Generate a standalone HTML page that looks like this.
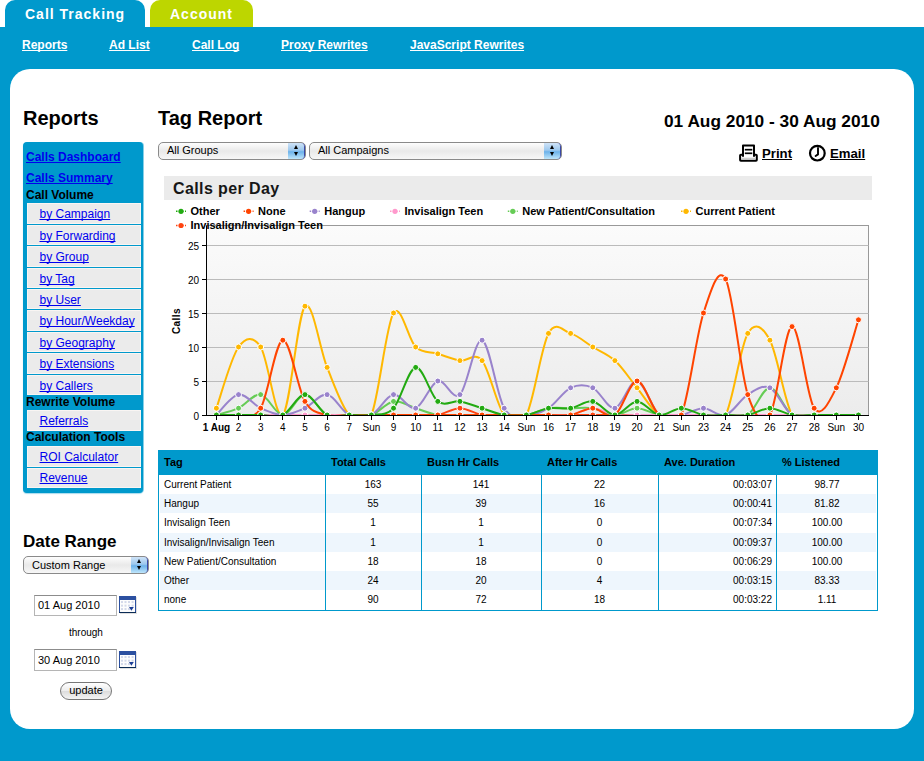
<!DOCTYPE html>
<html><head><meta charset="utf-8">
<style>
*{margin:0;padding:0;box-sizing:border-box;text-decoration-skip-ink:none}
html,body{width:924px;height:761px;overflow:hidden;background:#fff;font-family:"Liberation Sans",sans-serif;color:#000}
.abs{position:absolute}
#band{position:absolute;left:0;top:27px;width:924px;height:734px;background:#0099cc}
.tab{position:absolute;top:0;height:27px;border-radius:10px 10px 0 0;color:#fff;font-weight:bold;font-size:14px;letter-spacing:1px;line-height:29px;padding-left:20px}
#t1{left:5px;width:140px;background:#0099cc}
#t2{left:150px;width:103px;background:#bdd600}
.nav{position:absolute;top:38px;font-size:12px;font-weight:bold;color:#fff;text-decoration:underline;line-height:14px}
#panel{position:absolute;left:10px;top:69px;width:904px;height:660px;background:#fff;border-radius:20px}
h1{position:absolute;font-size:20px;font-weight:bold;line-height:22px}
#side{position:absolute;left:23px;top:142px;width:120px;height:351px;background:#0099cc;border-radius:4px;box-shadow:1px 0 0 rgba(0,153,204,0.45),0 1px 1px rgba(0,153,204,0.35)}
.sl{position:absolute;left:3px;font-size:12px;font-weight:bold;color:#0000ee;text-decoration:underline;line-height:14px}
.sh{position:absolute;left:3px;font-size:12px;font-weight:bold;color:#000;line-height:14px}
.it{position:absolute;left:4px;width:114px;background:#ebebeb;border:1px solid #f9f5f3;font-size:12px;line-height:14px;padding-left:11.5px}
.it span{color:#0000ee;text-decoration:underline;text-decoration-skip-ink:none;position:relative}
.sel{position:absolute;height:18px;border:1px solid #8a8a8a;border-radius:4px;background:linear-gradient(#fdfdfd,#e9e9e9 50%,#f7f7f7);font-size:11px;line-height:14px;padding-left:8px;overflow:hidden;border-radius:5px}
.sel .btn{position:absolute;right:0;top:-1px;width:17px;height:18px;border-radius:0 4px 4px 0;border:1px solid #3a48a8;border-left:none;background:linear-gradient(#cfe3f7,#9cc8ee 45%,#6cb2ea 55%,#bfe6fb)}
.sel .btn:before{content:"";position:absolute;left:6px;top:2px;border-left:2.5px solid transparent;border-right:2.5px solid transparent;border-bottom:4px solid #000}
.sel .btn:after{content:"";position:absolute;left:6px;top:9px;border-left:2.5px solid transparent;border-right:2.5px solid transparent;border-top:4px solid #000}
.ax{font-family:"Liberation Sans",sans-serif;font-size:10px;fill:#000}
.lg{font-family:"Liberation Sans",sans-serif;font-size:11px;font-weight:bold;fill:#000}
#ctitle{position:absolute;left:164px;top:176px;width:708px;height:24px;background:#ebebeb;font-size:16px;font-weight:bold;letter-spacing:0.4px;line-height:25px;padding-left:9px;color:#161616}
table{position:absolute;left:158px;top:450px;width:720px;border-collapse:collapse;font-size:11px}
th{background:#0099cc;height:25px;text-align:left;padding-left:6px;font-weight:bold;font-size:11px}
td{height:19.3px;padding:0 6px;border-left:1px solid #0099cc}
.th{font-size:11px;font-weight:bold;line-height:25px}
.td{font-size:10px;line-height:19.3px}
.inp{position:absolute;left:34px;width:83px;height:21px;border:1px solid #b5b5b5;border-top-color:#8c8c8c;font-size:11px;line-height:19px;padding-left:3px;background:#fff}
.cal{position:absolute;left:119px;width:17px;height:17px}
</style></head><body>
<div class="tab" id="t1">Call Tracking</div>
<div class="tab" id="t2">Account</div>
<div id="band"></div>
<div class="nav" style="left:22px">Reports</div>
<div class="nav" style="left:109px">Ad List</div>
<div class="nav" style="left:192px">Call Log</div>
<div class="nav" style="left:281px">Proxy Rewrites</div>
<div class="nav" style="left:410px">JavaScript Rewrites</div>
<div id="panel"></div>

<h1 style="left:23px;top:107px">Reports</h1>
<h1 style="left:158px;top:107px">Tag Report</h1>
<div class="abs" style="left:664px;top:112px;font-size:17.3px;font-weight:bold;line-height:18px">01 Aug 2010 - 30 Aug 2010</div>

<div id="side">
 <div class="sl" style="top:8px">Calls Dashboard</div>
 <div class="sl" style="top:29px">Calls Summary</div>
 <div class="sh" style="top:46px">Call Volume</div>
 <div class="it" style="top:61px;height:21px"><span style="top:3px">by Campaign</span></div>
 <div class="it" style="top:83px;height:20px"><span style="top:3px">by Forwarding</span></div>
 <div class="it" style="top:104px;height:21px"><span style="top:3px">by Group</span></div>
 <div class="it" style="top:126px;height:20px"><span style="top:3px">by Tag</span></div>
 <div class="it" style="top:147px;height:20px"><span style="top:3px">by User</span></div>
 <div class="it" style="top:168px;height:21px"><span style="top:3px">by Hour/Weekday</span></div>
 <div class="it" style="top:190px;height:20px"><span style="top:3px">by Geography</span></div>
 <div class="it" style="top:211px;height:21px"><span style="top:3px">by Extensions</span></div>
 <div class="it" style="top:233px;height:20px"><span style="top:3px">by Callers</span></div>
 <div class="sh" style="top:253px">Rewrite Volume</div>
 <div class="it" style="top:268px;height:21px"><span style="top:3px">Referrals</span></div>
 <div class="sh" style="top:288px">Calculation Tools</div>
 <div class="it" style="top:304px;height:21px"><span style="top:3px">ROI Calculator</span></div>
 <div class="it" style="top:326px;height:20px"><span style="top:2px">Revenue</span></div>
</div>

<div class="sel" style="left:158px;top:142px;width:148px">All Groups<div class="btn"></div></div>
<div class="sel" style="left:309px;top:142px;width:253px">All Campaigns<div class="btn"></div></div>

<svg class="abs" style="left:735px;top:138px" width="30" height="30" viewBox="0 0 30 30">
 <rect x="5.1" y="16.8" width="16.7" height="6" fill="#fff" stroke="#000" stroke-width="2" rx="0.8"/>
 <line x1="6.5" y1="20.3" x2="20.5" y2="20.3" stroke="#c8c8c8" stroke-width="1.2"/>
 <path d="M8,18.8 V7.4 H19 V18.8" fill="#fff" stroke="#000" stroke-width="2" stroke-linejoin="round"/>
 <line x1="9.8" y1="11.7" x2="17.3" y2="11.7" stroke="#000" stroke-width="1.7"/>
 <line x1="9.8" y1="15.3" x2="17.3" y2="15.3" stroke="#000" stroke-width="1.7"/>
</svg>
<div class="abs" style="left:762px;top:146px;font-size:13.2px;font-weight:bold;text-decoration:underline;line-height:16px">Print</div>
<svg class="abs" style="left:805px;top:138px" width="30" height="30" viewBox="0 0 30 30">
 <circle cx="12.35" cy="15.15" r="7.35" fill="none" stroke="#000" stroke-width="2.2"/>
 <path d="M13,9.9 V16.4 L10.6,18" fill="none" stroke="#000" stroke-width="1.9" stroke-linecap="round" stroke-linejoin="round"/>
</svg>
<div class="abs" style="left:830px;top:146px;font-size:13.2px;font-weight:bold;text-decoration:underline;line-height:16px">Email</div>

<div id="ctitle">Calls per Day</div>

<svg width="924" height="761" style="position:absolute;left:0;top:0">
<defs><linearGradient id="pg" x1="0" y1="0" x2="0" y2="1"><stop offset="0" stop-color="#fbfbfb"/><stop offset="1" stop-color="#ececec"/></linearGradient><clipPath id="pc"><rect x="206.5" y="220.5" width="662.0" height="194.5"/></clipPath></defs>
<rect x="206.5" y="225.5" width="662.0" height="190.0" fill="url(#pg)" stroke="#999" stroke-width="1"/>
<line x1="206.5" y1="381.5" x2="868.5" y2="381.5" stroke="#bbb" stroke-width="1"/>
<line x1="202" y1="381.5" x2="206.5" y2="381.5" stroke="#000" stroke-width="1"/>
<line x1="206.5" y1="347.5" x2="868.5" y2="347.5" stroke="#bbb" stroke-width="1"/>
<line x1="202" y1="347.5" x2="206.5" y2="347.5" stroke="#000" stroke-width="1"/>
<line x1="206.5" y1="313.5" x2="868.5" y2="313.5" stroke="#bbb" stroke-width="1"/>
<line x1="202" y1="313.5" x2="206.5" y2="313.5" stroke="#000" stroke-width="1"/>
<line x1="206.5" y1="279.5" x2="868.5" y2="279.5" stroke="#bbb" stroke-width="1"/>
<line x1="202" y1="279.5" x2="206.5" y2="279.5" stroke="#000" stroke-width="1"/>
<line x1="206.5" y1="245.5" x2="868.5" y2="245.5" stroke="#bbb" stroke-width="1"/>
<line x1="202" y1="245.5" x2="206.5" y2="245.5" stroke="#000" stroke-width="1"/>
<g clip-path="url(#pc)"><path d="M216.40,415.00 C220.09,415.00 231.16,415.00 238.54,415.00 C245.92,415.00 253.30,415.00 260.68,415.00 C268.06,415.00 275.44,415.00 282.82,415.00 C290.20,415.00 297.58,415.00 304.96,415.00 C312.34,415.00 319.72,415.00 327.10,415.00 C334.48,415.00 341.86,415.00 349.24,415.00 C356.62,415.00 364.00,415.00 371.38,415.00 C378.76,415.00 386.14,415.00 393.52,415.00 C400.90,415.00 408.28,415.00 415.66,415.00 C423.04,415.00 430.42,416.13 437.80,415.00 C445.18,413.87 452.56,408.20 459.94,408.20 C467.32,408.20 474.70,413.87 482.08,415.00 C489.46,416.13 496.84,415.00 504.22,415.00 C511.60,415.00 518.98,415.00 526.36,415.00 C533.74,415.00 541.12,415.00 548.50,415.00 C555.88,415.00 563.26,415.00 570.64,415.00 C578.02,415.00 585.40,415.00 592.78,415.00 C600.16,415.00 607.54,415.00 614.92,415.00 C622.30,415.00 629.68,415.00 637.06,415.00 C644.44,415.00 651.82,415.00 659.20,415.00 C666.58,415.00 673.96,415.00 681.34,415.00 C688.72,415.00 696.10,415.00 703.48,415.00 C710.86,415.00 718.24,415.00 725.62,415.00 C733.00,415.00 740.38,415.00 747.76,415.00 C755.14,415.00 762.52,415.00 769.90,415.00 C777.28,415.00 784.66,415.00 792.04,415.00 C799.42,415.00 806.80,415.00 814.18,415.00 C821.56,415.00 828.94,415.00 836.32,415.00 C843.70,415.00 854.77,415.00 858.46,415.00" fill="none" stroke="#ff4411" stroke-width="2"/><circle cx="216.40" cy="415.00" r="3" fill="#ff4411" stroke="#fff" stroke-width="1"/><circle cx="238.54" cy="415.00" r="3" fill="#ff4411" stroke="#fff" stroke-width="1"/><circle cx="260.68" cy="415.00" r="3" fill="#ff4411" stroke="#fff" stroke-width="1"/><circle cx="282.82" cy="415.00" r="3" fill="#ff4411" stroke="#fff" stroke-width="1"/><circle cx="304.96" cy="415.00" r="3" fill="#ff4411" stroke="#fff" stroke-width="1"/><circle cx="327.10" cy="415.00" r="3" fill="#ff4411" stroke="#fff" stroke-width="1"/><circle cx="349.24" cy="415.00" r="3" fill="#ff4411" stroke="#fff" stroke-width="1"/><circle cx="371.38" cy="415.00" r="3" fill="#ff4411" stroke="#fff" stroke-width="1"/><circle cx="393.52" cy="415.00" r="3" fill="#ff4411" stroke="#fff" stroke-width="1"/><circle cx="415.66" cy="415.00" r="3" fill="#ff4411" stroke="#fff" stroke-width="1"/><circle cx="437.80" cy="415.00" r="3" fill="#ff4411" stroke="#fff" stroke-width="1"/><circle cx="459.94" cy="408.20" r="3" fill="#ff4411" stroke="#fff" stroke-width="1"/><circle cx="482.08" cy="415.00" r="3" fill="#ff4411" stroke="#fff" stroke-width="1"/><circle cx="504.22" cy="415.00" r="3" fill="#ff4411" stroke="#fff" stroke-width="1"/><circle cx="526.36" cy="415.00" r="3" fill="#ff4411" stroke="#fff" stroke-width="1"/><circle cx="548.50" cy="415.00" r="3" fill="#ff4411" stroke="#fff" stroke-width="1"/><circle cx="570.64" cy="415.00" r="3" fill="#ff4411" stroke="#fff" stroke-width="1"/><circle cx="592.78" cy="415.00" r="3" fill="#ff4411" stroke="#fff" stroke-width="1"/><circle cx="614.92" cy="415.00" r="3" fill="#ff4411" stroke="#fff" stroke-width="1"/><circle cx="637.06" cy="415.00" r="3" fill="#ff4411" stroke="#fff" stroke-width="1"/><circle cx="659.20" cy="415.00" r="3" fill="#ff4411" stroke="#fff" stroke-width="1"/><circle cx="681.34" cy="415.00" r="3" fill="#ff4411" stroke="#fff" stroke-width="1"/><circle cx="703.48" cy="415.00" r="3" fill="#ff4411" stroke="#fff" stroke-width="1"/><circle cx="725.62" cy="415.00" r="3" fill="#ff4411" stroke="#fff" stroke-width="1"/><circle cx="747.76" cy="415.00" r="3" fill="#ff4411" stroke="#fff" stroke-width="1"/><circle cx="769.90" cy="415.00" r="3" fill="#ff4411" stroke="#fff" stroke-width="1"/><circle cx="792.04" cy="415.00" r="3" fill="#ff4411" stroke="#fff" stroke-width="1"/><circle cx="814.18" cy="415.00" r="3" fill="#ff4411" stroke="#fff" stroke-width="1"/><circle cx="836.32" cy="415.00" r="3" fill="#ff4411" stroke="#fff" stroke-width="1"/><circle cx="858.46" cy="415.00" r="3" fill="#ff4411" stroke="#fff" stroke-width="1"/></g>
<g clip-path="url(#pc)"><path d="M216.40,408.20 C220.09,398.00 231.16,357.20 238.54,347.00 C245.92,336.80 253.30,335.67 260.68,347.00 C268.06,358.33 275.44,421.80 282.82,415.00 C290.20,408.20 297.58,314.13 304.96,306.20 C312.34,298.27 319.72,349.27 327.10,367.40 C334.48,385.53 341.86,407.07 349.24,415.00 C356.62,422.93 364.00,432.00 371.38,415.00 C378.76,398.00 386.14,324.33 393.52,313.00 C400.90,301.67 408.28,340.20 415.66,347.00 C423.04,353.80 430.42,351.53 437.80,353.80 C445.18,356.07 452.56,359.47 459.94,360.60 C467.32,361.73 474.70,351.53 482.08,360.60 C489.46,369.67 496.84,405.93 504.22,415.00 C511.60,424.07 518.98,428.60 526.36,415.00 C533.74,401.40 541.12,347.00 548.50,333.40 C555.88,319.80 563.26,331.13 570.64,333.40 C578.02,335.67 585.40,342.47 592.78,347.00 C600.16,351.53 607.54,353.80 614.92,360.60 C622.30,367.40 629.68,378.73 637.06,387.80 C644.44,396.87 651.82,410.47 659.20,415.00 C666.58,419.53 673.96,415.00 681.34,415.00 C688.72,415.00 696.10,415.00 703.48,415.00 C710.86,415.00 718.24,428.60 725.62,415.00 C733.00,401.40 740.38,345.87 747.76,333.40 C755.14,320.93 762.52,326.60 769.90,340.20 C777.28,353.80 784.66,402.53 792.04,415.00 C799.42,427.47 806.80,415.00 814.18,415.00 C821.56,415.00 828.94,415.00 836.32,415.00 C843.70,415.00 854.77,415.00 858.46,415.00" fill="none" stroke="#ffb800" stroke-width="2"/><circle cx="216.40" cy="408.20" r="3" fill="#ffb800" stroke="#fff" stroke-width="1"/><circle cx="238.54" cy="347.00" r="3" fill="#ffb800" stroke="#fff" stroke-width="1"/><circle cx="260.68" cy="347.00" r="3" fill="#ffb800" stroke="#fff" stroke-width="1"/><circle cx="282.82" cy="415.00" r="3" fill="#ffb800" stroke="#fff" stroke-width="1"/><circle cx="304.96" cy="306.20" r="3" fill="#ffb800" stroke="#fff" stroke-width="1"/><circle cx="327.10" cy="367.40" r="3" fill="#ffb800" stroke="#fff" stroke-width="1"/><circle cx="349.24" cy="415.00" r="3" fill="#ffb800" stroke="#fff" stroke-width="1"/><circle cx="371.38" cy="415.00" r="3" fill="#ffb800" stroke="#fff" stroke-width="1"/><circle cx="393.52" cy="313.00" r="3" fill="#ffb800" stroke="#fff" stroke-width="1"/><circle cx="415.66" cy="347.00" r="3" fill="#ffb800" stroke="#fff" stroke-width="1"/><circle cx="437.80" cy="353.80" r="3" fill="#ffb800" stroke="#fff" stroke-width="1"/><circle cx="459.94" cy="360.60" r="3" fill="#ffb800" stroke="#fff" stroke-width="1"/><circle cx="482.08" cy="360.60" r="3" fill="#ffb800" stroke="#fff" stroke-width="1"/><circle cx="504.22" cy="415.00" r="3" fill="#ffb800" stroke="#fff" stroke-width="1"/><circle cx="526.36" cy="415.00" r="3" fill="#ffb800" stroke="#fff" stroke-width="1"/><circle cx="548.50" cy="333.40" r="3" fill="#ffb800" stroke="#fff" stroke-width="1"/><circle cx="570.64" cy="333.40" r="3" fill="#ffb800" stroke="#fff" stroke-width="1"/><circle cx="592.78" cy="347.00" r="3" fill="#ffb800" stroke="#fff" stroke-width="1"/><circle cx="614.92" cy="360.60" r="3" fill="#ffb800" stroke="#fff" stroke-width="1"/><circle cx="637.06" cy="387.80" r="3" fill="#ffb800" stroke="#fff" stroke-width="1"/><circle cx="659.20" cy="415.00" r="3" fill="#ffb800" stroke="#fff" stroke-width="1"/><circle cx="681.34" cy="415.00" r="3" fill="#ffb800" stroke="#fff" stroke-width="1"/><circle cx="703.48" cy="415.00" r="3" fill="#ffb800" stroke="#fff" stroke-width="1"/><circle cx="725.62" cy="415.00" r="3" fill="#ffb800" stroke="#fff" stroke-width="1"/><circle cx="747.76" cy="333.40" r="3" fill="#ffb800" stroke="#fff" stroke-width="1"/><circle cx="769.90" cy="340.20" r="3" fill="#ffb800" stroke="#fff" stroke-width="1"/><circle cx="792.04" cy="415.00" r="3" fill="#ffb800" stroke="#fff" stroke-width="1"/><circle cx="814.18" cy="415.00" r="3" fill="#ffb800" stroke="#fff" stroke-width="1"/><circle cx="836.32" cy="415.00" r="3" fill="#ffb800" stroke="#fff" stroke-width="1"/><circle cx="858.46" cy="415.00" r="3" fill="#ffb800" stroke="#fff" stroke-width="1"/></g>
<g clip-path="url(#pc)"><path d="M216.40,415.00 C220.09,413.87 231.16,411.60 238.54,408.20 C245.92,404.80 253.30,393.47 260.68,394.60 C268.06,395.73 275.44,415.00 282.82,415.00 C290.20,415.00 297.58,394.60 304.96,394.60 C312.34,394.60 319.72,411.60 327.10,415.00 C334.48,418.40 341.86,415.00 349.24,415.00 C356.62,415.00 364.00,417.27 371.38,415.00 C378.76,412.73 386.14,402.53 393.52,401.40 C400.90,400.27 408.28,405.93 415.66,408.20 C423.04,410.47 430.42,413.87 437.80,415.00 C445.18,416.13 452.56,415.00 459.94,415.00 C467.32,415.00 474.70,415.00 482.08,415.00 C489.46,415.00 496.84,415.00 504.22,415.00 C511.60,415.00 518.98,416.13 526.36,415.00 C533.74,413.87 541.12,409.33 548.50,408.20 C555.88,407.07 563.26,408.20 570.64,408.20 C578.02,408.20 585.40,407.07 592.78,408.20 C600.16,409.33 607.54,415.00 614.92,415.00 C622.30,415.00 629.68,408.20 637.06,408.20 C644.44,408.20 651.82,413.87 659.20,415.00 C666.58,416.13 673.96,415.00 681.34,415.00 C688.72,415.00 696.10,415.00 703.48,415.00 C710.86,415.00 718.24,415.00 725.62,415.00 C733.00,415.00 740.38,419.53 747.76,415.00 C755.14,410.47 762.52,387.80 769.90,387.80 C777.28,387.80 784.66,410.47 792.04,415.00 C799.42,419.53 806.80,415.00 814.18,415.00 C821.56,415.00 828.94,415.00 836.32,415.00 C843.70,415.00 854.77,415.00 858.46,415.00" fill="none" stroke="#66cc55" stroke-width="2"/><circle cx="216.40" cy="415.00" r="3" fill="#66cc55" stroke="#fff" stroke-width="1"/><circle cx="238.54" cy="408.20" r="3" fill="#66cc55" stroke="#fff" stroke-width="1"/><circle cx="260.68" cy="394.60" r="3" fill="#66cc55" stroke="#fff" stroke-width="1"/><circle cx="282.82" cy="415.00" r="3" fill="#66cc55" stroke="#fff" stroke-width="1"/><circle cx="304.96" cy="394.60" r="3" fill="#66cc55" stroke="#fff" stroke-width="1"/><circle cx="327.10" cy="415.00" r="3" fill="#66cc55" stroke="#fff" stroke-width="1"/><circle cx="349.24" cy="415.00" r="3" fill="#66cc55" stroke="#fff" stroke-width="1"/><circle cx="371.38" cy="415.00" r="3" fill="#66cc55" stroke="#fff" stroke-width="1"/><circle cx="393.52" cy="401.40" r="3" fill="#66cc55" stroke="#fff" stroke-width="1"/><circle cx="415.66" cy="408.20" r="3" fill="#66cc55" stroke="#fff" stroke-width="1"/><circle cx="437.80" cy="415.00" r="3" fill="#66cc55" stroke="#fff" stroke-width="1"/><circle cx="459.94" cy="415.00" r="3" fill="#66cc55" stroke="#fff" stroke-width="1"/><circle cx="482.08" cy="415.00" r="3" fill="#66cc55" stroke="#fff" stroke-width="1"/><circle cx="504.22" cy="415.00" r="3" fill="#66cc55" stroke="#fff" stroke-width="1"/><circle cx="526.36" cy="415.00" r="3" fill="#66cc55" stroke="#fff" stroke-width="1"/><circle cx="548.50" cy="408.20" r="3" fill="#66cc55" stroke="#fff" stroke-width="1"/><circle cx="570.64" cy="408.20" r="3" fill="#66cc55" stroke="#fff" stroke-width="1"/><circle cx="592.78" cy="408.20" r="3" fill="#66cc55" stroke="#fff" stroke-width="1"/><circle cx="614.92" cy="415.00" r="3" fill="#66cc55" stroke="#fff" stroke-width="1"/><circle cx="637.06" cy="408.20" r="3" fill="#66cc55" stroke="#fff" stroke-width="1"/><circle cx="659.20" cy="415.00" r="3" fill="#66cc55" stroke="#fff" stroke-width="1"/><circle cx="681.34" cy="415.00" r="3" fill="#66cc55" stroke="#fff" stroke-width="1"/><circle cx="703.48" cy="415.00" r="3" fill="#66cc55" stroke="#fff" stroke-width="1"/><circle cx="725.62" cy="415.00" r="3" fill="#66cc55" stroke="#fff" stroke-width="1"/><circle cx="747.76" cy="415.00" r="3" fill="#66cc55" stroke="#fff" stroke-width="1"/><circle cx="769.90" cy="387.80" r="3" fill="#66cc55" stroke="#fff" stroke-width="1"/><circle cx="792.04" cy="415.00" r="3" fill="#66cc55" stroke="#fff" stroke-width="1"/><circle cx="814.18" cy="415.00" r="3" fill="#66cc55" stroke="#fff" stroke-width="1"/><circle cx="836.32" cy="415.00" r="3" fill="#66cc55" stroke="#fff" stroke-width="1"/><circle cx="858.46" cy="415.00" r="3" fill="#66cc55" stroke="#fff" stroke-width="1"/></g>
<g clip-path="url(#pc)"><path d="M216.40,415.00 C220.09,415.00 231.16,415.00 238.54,415.00 C245.92,415.00 253.30,415.00 260.68,415.00 C268.06,415.00 275.44,415.00 282.82,415.00 C290.20,415.00 297.58,415.00 304.96,415.00 C312.34,415.00 319.72,415.00 327.10,415.00 C334.48,415.00 341.86,415.00 349.24,415.00 C356.62,415.00 364.00,415.00 371.38,415.00 C378.76,415.00 386.14,415.00 393.52,415.00 C400.90,415.00 408.28,415.00 415.66,415.00 C423.04,415.00 430.42,415.00 437.80,415.00 C445.18,415.00 452.56,415.00 459.94,415.00 C467.32,415.00 474.70,415.00 482.08,415.00 C489.46,415.00 496.84,415.00 504.22,415.00 C511.60,415.00 518.98,415.00 526.36,415.00 C533.74,415.00 541.12,415.00 548.50,415.00 C555.88,415.00 563.26,416.13 570.64,415.00 C578.02,413.87 585.40,408.20 592.78,408.20 C600.16,408.20 607.54,413.87 614.92,415.00 C622.30,416.13 629.68,415.00 637.06,415.00 C644.44,415.00 651.82,415.00 659.20,415.00 C666.58,415.00 673.96,415.00 681.34,415.00 C688.72,415.00 696.10,415.00 703.48,415.00 C710.86,415.00 718.24,415.00 725.62,415.00 C733.00,415.00 740.38,415.00 747.76,415.00 C755.14,415.00 762.52,415.00 769.90,415.00 C777.28,415.00 784.66,415.00 792.04,415.00 C799.42,415.00 806.80,415.00 814.18,415.00 C821.56,415.00 828.94,415.00 836.32,415.00 C843.70,415.00 854.77,415.00 858.46,415.00" fill="none" stroke="#ff99cc" stroke-width="2"/><circle cx="216.40" cy="415.00" r="3" fill="#ff99cc" stroke="#fff" stroke-width="1"/><circle cx="238.54" cy="415.00" r="3" fill="#ff99cc" stroke="#fff" stroke-width="1"/><circle cx="260.68" cy="415.00" r="3" fill="#ff99cc" stroke="#fff" stroke-width="1"/><circle cx="282.82" cy="415.00" r="3" fill="#ff99cc" stroke="#fff" stroke-width="1"/><circle cx="304.96" cy="415.00" r="3" fill="#ff99cc" stroke="#fff" stroke-width="1"/><circle cx="327.10" cy="415.00" r="3" fill="#ff99cc" stroke="#fff" stroke-width="1"/><circle cx="349.24" cy="415.00" r="3" fill="#ff99cc" stroke="#fff" stroke-width="1"/><circle cx="371.38" cy="415.00" r="3" fill="#ff99cc" stroke="#fff" stroke-width="1"/><circle cx="393.52" cy="415.00" r="3" fill="#ff99cc" stroke="#fff" stroke-width="1"/><circle cx="415.66" cy="415.00" r="3" fill="#ff99cc" stroke="#fff" stroke-width="1"/><circle cx="437.80" cy="415.00" r="3" fill="#ff99cc" stroke="#fff" stroke-width="1"/><circle cx="459.94" cy="415.00" r="3" fill="#ff99cc" stroke="#fff" stroke-width="1"/><circle cx="482.08" cy="415.00" r="3" fill="#ff99cc" stroke="#fff" stroke-width="1"/><circle cx="504.22" cy="415.00" r="3" fill="#ff99cc" stroke="#fff" stroke-width="1"/><circle cx="526.36" cy="415.00" r="3" fill="#ff99cc" stroke="#fff" stroke-width="1"/><circle cx="548.50" cy="415.00" r="3" fill="#ff99cc" stroke="#fff" stroke-width="1"/><circle cx="570.64" cy="415.00" r="3" fill="#ff99cc" stroke="#fff" stroke-width="1"/><circle cx="592.78" cy="408.20" r="3" fill="#ff99cc" stroke="#fff" stroke-width="1"/><circle cx="614.92" cy="415.00" r="3" fill="#ff99cc" stroke="#fff" stroke-width="1"/><circle cx="637.06" cy="415.00" r="3" fill="#ff99cc" stroke="#fff" stroke-width="1"/><circle cx="659.20" cy="415.00" r="3" fill="#ff99cc" stroke="#fff" stroke-width="1"/><circle cx="681.34" cy="415.00" r="3" fill="#ff99cc" stroke="#fff" stroke-width="1"/><circle cx="703.48" cy="415.00" r="3" fill="#ff99cc" stroke="#fff" stroke-width="1"/><circle cx="725.62" cy="415.00" r="3" fill="#ff99cc" stroke="#fff" stroke-width="1"/><circle cx="747.76" cy="415.00" r="3" fill="#ff99cc" stroke="#fff" stroke-width="1"/><circle cx="769.90" cy="415.00" r="3" fill="#ff99cc" stroke="#fff" stroke-width="1"/><circle cx="792.04" cy="415.00" r="3" fill="#ff99cc" stroke="#fff" stroke-width="1"/><circle cx="814.18" cy="415.00" r="3" fill="#ff99cc" stroke="#fff" stroke-width="1"/><circle cx="836.32" cy="415.00" r="3" fill="#ff99cc" stroke="#fff" stroke-width="1"/><circle cx="858.46" cy="415.00" r="3" fill="#ff99cc" stroke="#fff" stroke-width="1"/></g>
<g clip-path="url(#pc)"><path d="M216.40,415.00 C220.09,411.60 231.16,395.73 238.54,394.60 C245.92,393.47 253.30,404.80 260.68,408.20 C268.06,411.60 275.44,415.00 282.82,415.00 C290.20,415.00 297.58,411.60 304.96,408.20 C312.34,404.80 319.72,393.47 327.10,394.60 C334.48,395.73 341.86,411.60 349.24,415.00 C356.62,418.40 364.00,418.40 371.38,415.00 C378.76,411.60 386.14,395.73 393.52,394.60 C400.90,393.47 408.28,410.47 415.66,408.20 C423.04,405.93 430.42,383.27 437.80,381.00 C445.18,378.73 452.56,401.40 459.94,394.60 C467.32,387.80 474.70,337.93 482.08,340.20 C489.46,342.47 496.84,395.73 504.22,408.20 C511.60,420.67 518.98,415.00 526.36,415.00 C533.74,415.00 541.12,412.73 548.50,408.20 C555.88,403.67 563.26,391.20 570.64,387.80 C578.02,384.40 585.40,384.40 592.78,387.80 C600.16,391.20 607.54,409.33 614.92,408.20 C622.30,407.07 629.68,379.87 637.06,381.00 C644.44,382.13 651.82,409.33 659.20,415.00 C666.58,420.67 673.96,416.13 681.34,415.00 C688.72,413.87 696.10,408.20 703.48,408.20 C710.86,408.20 718.24,417.27 725.62,415.00 C733.00,412.73 740.38,399.13 747.76,394.60 C755.14,390.07 762.52,384.40 769.90,387.80 C777.28,391.20 784.66,410.47 792.04,415.00 C799.42,419.53 806.80,415.00 814.18,415.00 C821.56,415.00 828.94,415.00 836.32,415.00 C843.70,415.00 854.77,415.00 858.46,415.00" fill="none" stroke="#9983cc" stroke-width="2"/><circle cx="216.40" cy="415.00" r="3" fill="#9983cc" stroke="#fff" stroke-width="1"/><circle cx="238.54" cy="394.60" r="3" fill="#9983cc" stroke="#fff" stroke-width="1"/><circle cx="260.68" cy="408.20" r="3" fill="#9983cc" stroke="#fff" stroke-width="1"/><circle cx="282.82" cy="415.00" r="3" fill="#9983cc" stroke="#fff" stroke-width="1"/><circle cx="304.96" cy="408.20" r="3" fill="#9983cc" stroke="#fff" stroke-width="1"/><circle cx="327.10" cy="394.60" r="3" fill="#9983cc" stroke="#fff" stroke-width="1"/><circle cx="349.24" cy="415.00" r="3" fill="#9983cc" stroke="#fff" stroke-width="1"/><circle cx="371.38" cy="415.00" r="3" fill="#9983cc" stroke="#fff" stroke-width="1"/><circle cx="393.52" cy="394.60" r="3" fill="#9983cc" stroke="#fff" stroke-width="1"/><circle cx="415.66" cy="408.20" r="3" fill="#9983cc" stroke="#fff" stroke-width="1"/><circle cx="437.80" cy="381.00" r="3" fill="#9983cc" stroke="#fff" stroke-width="1"/><circle cx="459.94" cy="394.60" r="3" fill="#9983cc" stroke="#fff" stroke-width="1"/><circle cx="482.08" cy="340.20" r="3" fill="#9983cc" stroke="#fff" stroke-width="1"/><circle cx="504.22" cy="408.20" r="3" fill="#9983cc" stroke="#fff" stroke-width="1"/><circle cx="526.36" cy="415.00" r="3" fill="#9983cc" stroke="#fff" stroke-width="1"/><circle cx="548.50" cy="408.20" r="3" fill="#9983cc" stroke="#fff" stroke-width="1"/><circle cx="570.64" cy="387.80" r="3" fill="#9983cc" stroke="#fff" stroke-width="1"/><circle cx="592.78" cy="387.80" r="3" fill="#9983cc" stroke="#fff" stroke-width="1"/><circle cx="614.92" cy="408.20" r="3" fill="#9983cc" stroke="#fff" stroke-width="1"/><circle cx="637.06" cy="381.00" r="3" fill="#9983cc" stroke="#fff" stroke-width="1"/><circle cx="659.20" cy="415.00" r="3" fill="#9983cc" stroke="#fff" stroke-width="1"/><circle cx="681.34" cy="415.00" r="3" fill="#9983cc" stroke="#fff" stroke-width="1"/><circle cx="703.48" cy="408.20" r="3" fill="#9983cc" stroke="#fff" stroke-width="1"/><circle cx="725.62" cy="415.00" r="3" fill="#9983cc" stroke="#fff" stroke-width="1"/><circle cx="747.76" cy="394.60" r="3" fill="#9983cc" stroke="#fff" stroke-width="1"/><circle cx="769.90" cy="387.80" r="3" fill="#9983cc" stroke="#fff" stroke-width="1"/><circle cx="792.04" cy="415.00" r="3" fill="#9983cc" stroke="#fff" stroke-width="1"/><circle cx="814.18" cy="415.00" r="3" fill="#9983cc" stroke="#fff" stroke-width="1"/><circle cx="836.32" cy="415.00" r="3" fill="#9983cc" stroke="#fff" stroke-width="1"/><circle cx="858.46" cy="415.00" r="3" fill="#9983cc" stroke="#fff" stroke-width="1"/></g>
<g clip-path="url(#pc)"><path d="M216.40,415.00 C220.09,415.00 231.16,416.13 238.54,415.00 C245.92,413.87 253.30,420.67 260.68,408.20 C268.06,395.73 275.44,341.33 282.82,340.20 C290.20,339.07 297.58,388.93 304.96,401.40 C312.34,413.87 319.72,412.73 327.10,415.00 C334.48,417.27 341.86,415.00 349.24,415.00 C356.62,415.00 364.00,415.00 371.38,415.00 C378.76,415.00 386.14,415.00 393.52,415.00 C400.90,415.00 408.28,415.00 415.66,415.00 C423.04,415.00 430.42,415.00 437.80,415.00 C445.18,415.00 452.56,415.00 459.94,415.00 C467.32,415.00 474.70,415.00 482.08,415.00 C489.46,415.00 496.84,415.00 504.22,415.00 C511.60,415.00 518.98,415.00 526.36,415.00 C533.74,415.00 541.12,415.00 548.50,415.00 C555.88,415.00 563.26,416.13 570.64,415.00 C578.02,413.87 585.40,408.20 592.78,408.20 C600.16,408.20 607.54,419.53 614.92,415.00 C622.30,410.47 629.68,381.00 637.06,381.00 C644.44,381.00 651.82,409.33 659.20,415.00 C666.58,420.67 673.96,432.00 681.34,415.00 C688.72,398.00 696.10,335.67 703.48,313.00 C710.86,290.33 718.24,265.40 725.62,279.00 C733.00,292.60 740.38,371.93 747.76,394.60 C755.14,417.27 762.52,426.33 769.90,415.00 C777.28,403.67 784.66,327.73 792.04,326.60 C799.42,325.47 806.80,398.00 814.18,408.20 C821.56,418.40 828.94,402.53 836.32,387.80 C843.70,373.07 854.77,331.13 858.46,319.80" fill="none" stroke="#ff4400" stroke-width="2"/><circle cx="216.40" cy="415.00" r="3" fill="#ff4400" stroke="#fff" stroke-width="1"/><circle cx="238.54" cy="415.00" r="3" fill="#ff4400" stroke="#fff" stroke-width="1"/><circle cx="260.68" cy="408.20" r="3" fill="#ff4400" stroke="#fff" stroke-width="1"/><circle cx="282.82" cy="340.20" r="3" fill="#ff4400" stroke="#fff" stroke-width="1"/><circle cx="304.96" cy="401.40" r="3" fill="#ff4400" stroke="#fff" stroke-width="1"/><circle cx="327.10" cy="415.00" r="3" fill="#ff4400" stroke="#fff" stroke-width="1"/><circle cx="349.24" cy="415.00" r="3" fill="#ff4400" stroke="#fff" stroke-width="1"/><circle cx="371.38" cy="415.00" r="3" fill="#ff4400" stroke="#fff" stroke-width="1"/><circle cx="393.52" cy="415.00" r="3" fill="#ff4400" stroke="#fff" stroke-width="1"/><circle cx="415.66" cy="415.00" r="3" fill="#ff4400" stroke="#fff" stroke-width="1"/><circle cx="437.80" cy="415.00" r="3" fill="#ff4400" stroke="#fff" stroke-width="1"/><circle cx="459.94" cy="415.00" r="3" fill="#ff4400" stroke="#fff" stroke-width="1"/><circle cx="482.08" cy="415.00" r="3" fill="#ff4400" stroke="#fff" stroke-width="1"/><circle cx="504.22" cy="415.00" r="3" fill="#ff4400" stroke="#fff" stroke-width="1"/><circle cx="526.36" cy="415.00" r="3" fill="#ff4400" stroke="#fff" stroke-width="1"/><circle cx="548.50" cy="415.00" r="3" fill="#ff4400" stroke="#fff" stroke-width="1"/><circle cx="570.64" cy="415.00" r="3" fill="#ff4400" stroke="#fff" stroke-width="1"/><circle cx="592.78" cy="408.20" r="3" fill="#ff4400" stroke="#fff" stroke-width="1"/><circle cx="614.92" cy="415.00" r="3" fill="#ff4400" stroke="#fff" stroke-width="1"/><circle cx="637.06" cy="381.00" r="3" fill="#ff4400" stroke="#fff" stroke-width="1"/><circle cx="659.20" cy="415.00" r="3" fill="#ff4400" stroke="#fff" stroke-width="1"/><circle cx="681.34" cy="415.00" r="3" fill="#ff4400" stroke="#fff" stroke-width="1"/><circle cx="703.48" cy="313.00" r="3" fill="#ff4400" stroke="#fff" stroke-width="1"/><circle cx="725.62" cy="279.00" r="3" fill="#ff4400" stroke="#fff" stroke-width="1"/><circle cx="747.76" cy="394.60" r="3" fill="#ff4400" stroke="#fff" stroke-width="1"/><circle cx="769.90" cy="415.00" r="3" fill="#ff4400" stroke="#fff" stroke-width="1"/><circle cx="792.04" cy="326.60" r="3" fill="#ff4400" stroke="#fff" stroke-width="1"/><circle cx="814.18" cy="408.20" r="3" fill="#ff4400" stroke="#fff" stroke-width="1"/><circle cx="836.32" cy="387.80" r="3" fill="#ff4400" stroke="#fff" stroke-width="1"/><circle cx="858.46" cy="319.80" r="3" fill="#ff4400" stroke="#fff" stroke-width="1"/></g>
<g clip-path="url(#pc)"><path d="M216.40,415.00 C220.09,415.00 231.16,415.00 238.54,415.00 C245.92,415.00 253.30,415.00 260.68,415.00 C268.06,415.00 275.44,418.40 282.82,415.00 C290.20,411.60 297.58,394.60 304.96,394.60 C312.34,394.60 319.72,411.60 327.10,415.00 C334.48,418.40 341.86,415.00 349.24,415.00 C356.62,415.00 364.00,416.13 371.38,415.00 C378.76,413.87 386.14,416.13 393.52,408.20 C400.90,400.27 408.28,368.53 415.66,367.40 C423.04,366.27 430.42,395.73 437.80,401.40 C445.18,407.07 452.56,400.27 459.94,401.40 C467.32,402.53 474.70,405.93 482.08,408.20 C489.46,410.47 496.84,413.87 504.22,415.00 C511.60,416.13 518.98,416.13 526.36,415.00 C533.74,413.87 541.12,409.33 548.50,408.20 C555.88,407.07 563.26,409.33 570.64,408.20 C578.02,407.07 585.40,400.27 592.78,401.40 C600.16,402.53 607.54,415.00 614.92,415.00 C622.30,415.00 629.68,401.40 637.06,401.40 C644.44,401.40 651.82,413.87 659.20,415.00 C666.58,416.13 673.96,408.20 681.34,408.20 C688.72,408.20 696.10,413.87 703.48,415.00 C710.86,416.13 718.24,415.00 725.62,415.00 C733.00,415.00 740.38,416.13 747.76,415.00 C755.14,413.87 762.52,408.20 769.90,408.20 C777.28,408.20 784.66,413.87 792.04,415.00 C799.42,416.13 806.80,415.00 814.18,415.00 C821.56,415.00 828.94,415.00 836.32,415.00 C843.70,415.00 854.77,415.00 858.46,415.00" fill="none" stroke="#22aa11" stroke-width="2"/><circle cx="216.40" cy="415.00" r="3" fill="#22aa11" stroke="#fff" stroke-width="1"/><circle cx="238.54" cy="415.00" r="3" fill="#22aa11" stroke="#fff" stroke-width="1"/><circle cx="260.68" cy="415.00" r="3" fill="#22aa11" stroke="#fff" stroke-width="1"/><circle cx="282.82" cy="415.00" r="3" fill="#22aa11" stroke="#fff" stroke-width="1"/><circle cx="304.96" cy="394.60" r="3" fill="#22aa11" stroke="#fff" stroke-width="1"/><circle cx="327.10" cy="415.00" r="3" fill="#22aa11" stroke="#fff" stroke-width="1"/><circle cx="349.24" cy="415.00" r="3" fill="#22aa11" stroke="#fff" stroke-width="1"/><circle cx="371.38" cy="415.00" r="3" fill="#22aa11" stroke="#fff" stroke-width="1"/><circle cx="393.52" cy="408.20" r="3" fill="#22aa11" stroke="#fff" stroke-width="1"/><circle cx="415.66" cy="367.40" r="3" fill="#22aa11" stroke="#fff" stroke-width="1"/><circle cx="437.80" cy="401.40" r="3" fill="#22aa11" stroke="#fff" stroke-width="1"/><circle cx="459.94" cy="401.40" r="3" fill="#22aa11" stroke="#fff" stroke-width="1"/><circle cx="482.08" cy="408.20" r="3" fill="#22aa11" stroke="#fff" stroke-width="1"/><circle cx="504.22" cy="415.00" r="3" fill="#22aa11" stroke="#fff" stroke-width="1"/><circle cx="526.36" cy="415.00" r="3" fill="#22aa11" stroke="#fff" stroke-width="1"/><circle cx="548.50" cy="408.20" r="3" fill="#22aa11" stroke="#fff" stroke-width="1"/><circle cx="570.64" cy="408.20" r="3" fill="#22aa11" stroke="#fff" stroke-width="1"/><circle cx="592.78" cy="401.40" r="3" fill="#22aa11" stroke="#fff" stroke-width="1"/><circle cx="614.92" cy="415.00" r="3" fill="#22aa11" stroke="#fff" stroke-width="1"/><circle cx="637.06" cy="401.40" r="3" fill="#22aa11" stroke="#fff" stroke-width="1"/><circle cx="659.20" cy="415.00" r="3" fill="#22aa11" stroke="#fff" stroke-width="1"/><circle cx="681.34" cy="408.20" r="3" fill="#22aa11" stroke="#fff" stroke-width="1"/><circle cx="703.48" cy="415.00" r="3" fill="#22aa11" stroke="#fff" stroke-width="1"/><circle cx="725.62" cy="415.00" r="3" fill="#22aa11" stroke="#fff" stroke-width="1"/><circle cx="747.76" cy="415.00" r="3" fill="#22aa11" stroke="#fff" stroke-width="1"/><circle cx="769.90" cy="408.20" r="3" fill="#22aa11" stroke="#fff" stroke-width="1"/><circle cx="792.04" cy="415.00" r="3" fill="#22aa11" stroke="#fff" stroke-width="1"/><circle cx="814.18" cy="415.00" r="3" fill="#22aa11" stroke="#fff" stroke-width="1"/><circle cx="836.32" cy="415.00" r="3" fill="#22aa11" stroke="#fff" stroke-width="1"/><circle cx="858.46" cy="415.00" r="3" fill="#22aa11" stroke="#fff" stroke-width="1"/></g>
<line x1="202" y1="415.5" x2="206.5" y2="415.5" stroke="#000" stroke-width="1"/>
<line x1="206.5" y1="225.5" x2="206.5" y2="416" stroke="#000" stroke-width="1"/>
<line x1="206" y1="415.5" x2="869" y2="415.5" stroke="#000" stroke-width="1"/>
<line x1="216.5" y1="415" x2="216.5" y2="420" stroke="#000" stroke-width="1"/>
<line x1="238.5" y1="415" x2="238.5" y2="420" stroke="#000" stroke-width="1"/>
<line x1="260.5" y1="415" x2="260.5" y2="420" stroke="#000" stroke-width="1"/>
<line x1="282.5" y1="415" x2="282.5" y2="420" stroke="#000" stroke-width="1"/>
<line x1="304.5" y1="415" x2="304.5" y2="420" stroke="#000" stroke-width="1"/>
<line x1="327.5" y1="415" x2="327.5" y2="420" stroke="#000" stroke-width="1"/>
<line x1="349.5" y1="415" x2="349.5" y2="420" stroke="#000" stroke-width="1"/>
<line x1="371.5" y1="415" x2="371.5" y2="420" stroke="#000" stroke-width="1"/>
<line x1="393.5" y1="415" x2="393.5" y2="420" stroke="#000" stroke-width="1"/>
<line x1="415.5" y1="415" x2="415.5" y2="420" stroke="#000" stroke-width="1"/>
<line x1="437.5" y1="415" x2="437.5" y2="420" stroke="#000" stroke-width="1"/>
<line x1="459.5" y1="415" x2="459.5" y2="420" stroke="#000" stroke-width="1"/>
<line x1="482.5" y1="415" x2="482.5" y2="420" stroke="#000" stroke-width="1"/>
<line x1="504.5" y1="415" x2="504.5" y2="420" stroke="#000" stroke-width="1"/>
<line x1="526.5" y1="415" x2="526.5" y2="420" stroke="#000" stroke-width="1"/>
<line x1="548.5" y1="415" x2="548.5" y2="420" stroke="#000" stroke-width="1"/>
<line x1="570.5" y1="415" x2="570.5" y2="420" stroke="#000" stroke-width="1"/>
<line x1="592.5" y1="415" x2="592.5" y2="420" stroke="#000" stroke-width="1"/>
<line x1="614.5" y1="415" x2="614.5" y2="420" stroke="#000" stroke-width="1"/>
<line x1="637.5" y1="415" x2="637.5" y2="420" stroke="#000" stroke-width="1"/>
<line x1="659.5" y1="415" x2="659.5" y2="420" stroke="#000" stroke-width="1"/>
<line x1="681.5" y1="415" x2="681.5" y2="420" stroke="#000" stroke-width="1"/>
<line x1="703.5" y1="415" x2="703.5" y2="420" stroke="#000" stroke-width="1"/>
<line x1="725.5" y1="415" x2="725.5" y2="420" stroke="#000" stroke-width="1"/>
<line x1="747.5" y1="415" x2="747.5" y2="420" stroke="#000" stroke-width="1"/>
<line x1="769.5" y1="415" x2="769.5" y2="420" stroke="#000" stroke-width="1"/>
<line x1="792.5" y1="415" x2="792.5" y2="420" stroke="#000" stroke-width="1"/>
<line x1="814.5" y1="415" x2="814.5" y2="420" stroke="#000" stroke-width="1"/>
<line x1="836.5" y1="415" x2="836.5" y2="420" stroke="#000" stroke-width="1"/>
<line x1="858.5" y1="415" x2="858.5" y2="420" stroke="#000" stroke-width="1"/>
<text x="199.1" y="420.0" text-anchor="end" class="ax">0</text>
<text x="199.1" y="386.0" text-anchor="end" class="ax">5</text>
<text x="199.1" y="352.0" text-anchor="end" class="ax">10</text>
<text x="199.1" y="318.0" text-anchor="end" class="ax">15</text>
<text x="199.1" y="284.0" text-anchor="end" class="ax">20</text>
<text x="199.1" y="250.0" text-anchor="end" class="ax">25</text>
<text x="216.4" y="430.5" text-anchor="middle" class="ax" font-weight="bold">1 Aug</text>
<text x="238.5" y="430.5" text-anchor="middle" class="ax">2</text>
<text x="260.7" y="430.5" text-anchor="middle" class="ax">3</text>
<text x="282.8" y="430.5" text-anchor="middle" class="ax">4</text>
<text x="305.0" y="430.5" text-anchor="middle" class="ax">5</text>
<text x="327.1" y="430.5" text-anchor="middle" class="ax">6</text>
<text x="349.2" y="430.5" text-anchor="middle" class="ax">7</text>
<text x="371.4" y="430.5" text-anchor="middle" class="ax">Sun</text>
<text x="393.5" y="430.5" text-anchor="middle" class="ax">9</text>
<text x="415.7" y="430.5" text-anchor="middle" class="ax">10</text>
<text x="437.8" y="430.5" text-anchor="middle" class="ax">11</text>
<text x="459.9" y="430.5" text-anchor="middle" class="ax">12</text>
<text x="482.1" y="430.5" text-anchor="middle" class="ax">13</text>
<text x="504.2" y="430.5" text-anchor="middle" class="ax">14</text>
<text x="526.4" y="430.5" text-anchor="middle" class="ax">Sun</text>
<text x="548.5" y="430.5" text-anchor="middle" class="ax">16</text>
<text x="570.6" y="430.5" text-anchor="middle" class="ax">17</text>
<text x="592.8" y="430.5" text-anchor="middle" class="ax">18</text>
<text x="614.9" y="430.5" text-anchor="middle" class="ax">19</text>
<text x="637.1" y="430.5" text-anchor="middle" class="ax">20</text>
<text x="659.2" y="430.5" text-anchor="middle" class="ax">21</text>
<text x="681.3" y="430.5" text-anchor="middle" class="ax">Sun</text>
<text x="703.5" y="430.5" text-anchor="middle" class="ax">23</text>
<text x="725.6" y="430.5" text-anchor="middle" class="ax">24</text>
<text x="747.8" y="430.5" text-anchor="middle" class="ax">25</text>
<text x="769.9" y="430.5" text-anchor="middle" class="ax">26</text>
<text x="792.0" y="430.5" text-anchor="middle" class="ax">27</text>
<text x="814.2" y="430.5" text-anchor="middle" class="ax">28</text>
<text x="836.3" y="430.5" text-anchor="middle" class="ax">Sun</text>
<text x="858.5" y="430.5" text-anchor="middle" class="ax">30</text>
<text transform="translate(180.2,321) rotate(-90)" text-anchor="middle" class="ax" font-weight="bold" font-size="11.6" letter-spacing="0.45">Calls</text>
<line x1="176.0" y1="211.3" x2="186.0" y2="211.3" stroke="#22aa11" stroke-width="1.5" stroke-dasharray="1.5,1.5"/>
<circle cx="181.0" cy="211.3" r="2.6" fill="#22aa11"/>
<text x="190.5" y="214.9" class="lg">Other</text>
<line x1="243.6" y1="211.3" x2="253.6" y2="211.3" stroke="#ff4400" stroke-width="1.5" stroke-dasharray="1.5,1.5"/>
<circle cx="248.6" cy="211.3" r="2.6" fill="#ff4400"/>
<text x="258.1" y="214.9" class="lg">None</text>
<line x1="309.7" y1="211.3" x2="319.7" y2="211.3" stroke="#9983cc" stroke-width="1.5" stroke-dasharray="1.5,1.5"/>
<circle cx="314.7" cy="211.3" r="2.6" fill="#9983cc"/>
<text x="324.2" y="214.9" class="lg">Hangup</text>
<line x1="390.0" y1="211.3" x2="400.0" y2="211.3" stroke="#ff99cc" stroke-width="1.5" stroke-dasharray="1.5,1.5"/>
<circle cx="395.0" cy="211.3" r="2.6" fill="#ff99cc"/>
<text x="404.5" y="214.9" class="lg">Invisalign Teen</text>
<line x1="507.8" y1="211.3" x2="517.8" y2="211.3" stroke="#66cc55" stroke-width="1.5" stroke-dasharray="1.5,1.5"/>
<circle cx="512.8" cy="211.3" r="2.6" fill="#66cc55"/>
<text x="522.3" y="214.9" class="lg">New Patient/Consultation</text>
<line x1="681.0" y1="211.3" x2="691.0" y2="211.3" stroke="#ffb800" stroke-width="1.5" stroke-dasharray="1.5,1.5"/>
<circle cx="686.0" cy="211.3" r="2.6" fill="#ffb800"/>
<text x="695.5" y="214.9" class="lg">Current Patient</text>
<line x1="176.0" y1="225.5" x2="186.0" y2="225.5" stroke="#ff4411" stroke-width="1.5" stroke-dasharray="1.5,1.5"/>
<circle cx="181.0" cy="225.5" r="2.6" fill="#ff4411"/>
<text x="190.5" y="229.1" class="lg">Invisalign/Invisalign Teen</text>
</svg>

<div class="abs" style="left:158px;top:450px;width:720px;height:24.6px;background:#0099cc"></div>
<div class="abs th" style="left:164px;top:450px">Tag</div>
<div class="abs th" style="left:331px;top:450px">Total Calls</div>
<div class="abs th" style="left:427px;top:450px">Busn Hr Calls</div>
<div class="abs th" style="left:547px;top:450px">After Hr Calls</div>
<div class="abs th" style="left:664px;top:450px">Ave. Duration</div>
<div class="abs th" style="left:782px;top:450px">% Listened</div>
<div class="abs" style="left:158px;top:474.6px;width:720px;height:136.0px;border:1px solid #0099cc;border-top:none"></div>
<div class="abs" style="left:160px;top:493.90px;width:716px;height:19.30px;background:#eef6fd"></div>
<div class="abs" style="left:160px;top:532.50px;width:716px;height:19.30px;background:#eef6fd"></div>
<div class="abs" style="left:160px;top:571.10px;width:716px;height:19.30px;background:#eef6fd"></div>
<div class="abs" style="left:325px;top:474.6px;width:1px;height:136.0px;background:#0099cc"></div>
<div class="abs" style="left:421px;top:474.6px;width:1px;height:136.0px;background:#0099cc"></div>
<div class="abs" style="left:541px;top:474.6px;width:1px;height:136.0px;background:#0099cc"></div>
<div class="abs" style="left:658px;top:474.6px;width:1px;height:136.0px;background:#0099cc"></div>
<div class="abs" style="left:776px;top:474.6px;width:1px;height:136.0px;background:#0099cc"></div>
<div class="abs td" style="left:164px;top:474.60px">Current Patient</div>
<div class="abs td" style="left:325px;width:96px;text-align:center;top:474.60px">163</div>
<div class="abs td" style="left:421px;width:120px;text-align:center;top:474.60px">141</div>
<div class="abs td" style="left:541px;width:117px;text-align:center;top:474.60px">22</div>
<div class="abs td" style="left:658px;width:114px;text-align:right;top:474.60px">00:03:07</div>
<div class="abs td" style="left:776px;width:102px;text-align:center;top:474.60px">98.77</div>
<div class="abs td" style="left:164px;top:493.90px">Hangup</div>
<div class="abs td" style="left:325px;width:96px;text-align:center;top:493.90px">55</div>
<div class="abs td" style="left:421px;width:120px;text-align:center;top:493.90px">39</div>
<div class="abs td" style="left:541px;width:117px;text-align:center;top:493.90px">16</div>
<div class="abs td" style="left:658px;width:114px;text-align:right;top:493.90px">00:00:41</div>
<div class="abs td" style="left:776px;width:102px;text-align:center;top:493.90px">81.82</div>
<div class="abs td" style="left:164px;top:513.20px">Invisalign Teen</div>
<div class="abs td" style="left:325px;width:96px;text-align:center;top:513.20px">1</div>
<div class="abs td" style="left:421px;width:120px;text-align:center;top:513.20px">1</div>
<div class="abs td" style="left:541px;width:117px;text-align:center;top:513.20px">0</div>
<div class="abs td" style="left:658px;width:114px;text-align:right;top:513.20px">00:07:34</div>
<div class="abs td" style="left:776px;width:102px;text-align:center;top:513.20px">100.00</div>
<div class="abs td" style="left:164px;top:532.50px">Invisalign/Invisalign Teen</div>
<div class="abs td" style="left:325px;width:96px;text-align:center;top:532.50px">1</div>
<div class="abs td" style="left:421px;width:120px;text-align:center;top:532.50px">1</div>
<div class="abs td" style="left:541px;width:117px;text-align:center;top:532.50px">0</div>
<div class="abs td" style="left:658px;width:114px;text-align:right;top:532.50px">00:09:37</div>
<div class="abs td" style="left:776px;width:102px;text-align:center;top:532.50px">100.00</div>
<div class="abs td" style="left:164px;top:551.80px">New Patient/Consultation</div>
<div class="abs td" style="left:325px;width:96px;text-align:center;top:551.80px">18</div>
<div class="abs td" style="left:421px;width:120px;text-align:center;top:551.80px">18</div>
<div class="abs td" style="left:541px;width:117px;text-align:center;top:551.80px">0</div>
<div class="abs td" style="left:658px;width:114px;text-align:right;top:551.80px">00:06:29</div>
<div class="abs td" style="left:776px;width:102px;text-align:center;top:551.80px">100.00</div>
<div class="abs td" style="left:164px;top:571.10px">Other</div>
<div class="abs td" style="left:325px;width:96px;text-align:center;top:571.10px">24</div>
<div class="abs td" style="left:421px;width:120px;text-align:center;top:571.10px">20</div>
<div class="abs td" style="left:541px;width:117px;text-align:center;top:571.10px">4</div>
<div class="abs td" style="left:658px;width:114px;text-align:right;top:571.10px">00:03:15</div>
<div class="abs td" style="left:776px;width:102px;text-align:center;top:571.10px">83.33</div>
<div class="abs td" style="left:164px;top:590.40px">none</div>
<div class="abs td" style="left:325px;width:96px;text-align:center;top:590.40px">90</div>
<div class="abs td" style="left:421px;width:120px;text-align:center;top:590.40px">72</div>
<div class="abs td" style="left:541px;width:117px;text-align:center;top:590.40px">18</div>
<div class="abs td" style="left:658px;width:114px;text-align:right;top:590.40px">00:03:22</div>
<div class="abs td" style="left:776px;width:102px;text-align:center;top:590.40px">1.11</div>

<h1 class="abs" style="left:23px;top:531px;font-size:17px">Date Range</h1>
<div class="sel" style="left:23px;top:556px;width:126px;padding-top:1px">Custom Range<div class="btn"></div></div>
<div class="inp" style="top:595px">01 Aug 2010</div>
<svg class="abs" style="left:119px;top:596px" width="19" height="19" viewBox="0 0 19 19">
 <rect x="1" y="1" width="17" height="17" fill="#000" opacity="0.12"/>
 <rect x="0" y="0" width="17" height="17" fill="#2c50a0"/>
 <rect x="1" y="4" width="15" height="12" fill="#fdfdfd"/>
 <rect x="0" y="16" width="17" height="1" fill="#0b2c55"/>
 <g fill="#d3d9ea">
 <rect x="2" y="5.05" width="2" height="2"/><rect x="5.5" y="5.05" width="2" height="2"/><rect x="9" y="5.05" width="2" height="2"/><rect x="12.6" y="5.05" width="2" height="2"/>
 <rect x="2" y="8.65" width="2" height="2"/><rect x="5.5" y="8.65" width="2" height="2"/><rect x="9" y="8.65" width="2" height="2"/><rect x="12.6" y="8.65" width="2" height="2"/>
 <rect x="2" y="12.05" width="2" height="2"/><rect x="5.5" y="12.05" width="2" height="2"/><rect x="9" y="12.05" width="2" height="2"/>
 </g>
 <path d="M10,11.1 H14.8 L12.4,14.8 Z" fill="#1d3f95"/>
</svg>
<svg class="abs" style="left:119px;top:651px" width="19" height="19" viewBox="0 0 19 19">
 <rect x="1" y="1" width="17" height="17" fill="#000" opacity="0.12"/>
 <rect x="0" y="0" width="17" height="17" fill="#2c50a0"/>
 <rect x="1" y="4" width="15" height="12" fill="#fdfdfd"/>
 <rect x="0" y="16" width="17" height="1" fill="#0b2c55"/>
 <g fill="#d3d9ea">
 <rect x="2" y="5.05" width="2" height="2"/><rect x="5.5" y="5.05" width="2" height="2"/><rect x="9" y="5.05" width="2" height="2"/><rect x="12.6" y="5.05" width="2" height="2"/>
 <rect x="2" y="8.65" width="2" height="2"/><rect x="5.5" y="8.65" width="2" height="2"/><rect x="9" y="8.65" width="2" height="2"/><rect x="12.6" y="8.65" width="2" height="2"/>
 <rect x="2" y="12.05" width="2" height="2"/><rect x="5.5" y="12.05" width="2" height="2"/><rect x="9" y="12.05" width="2" height="2"/>
 </g>
 <path d="M10,11.1 H14.8 L12.4,14.8 Z" fill="#1d3f95"/>
</svg>
<div class="abs" style="left:69px;top:627px;font-size:10px">through</div>
<div class="inp" style="top:649px;height:22px;line-height:20px">30 Aug 2010</div>
<div class="abs" style="left:60px;top:682px;width:52px;height:18px;border:1px solid #777;border-radius:9px;background:linear-gradient(#fff,#ececec 50%,#dcdcdc 51%,#f4f4f4);font-size:11px;line-height:15px;text-align:center">update</div>
</body></html>
